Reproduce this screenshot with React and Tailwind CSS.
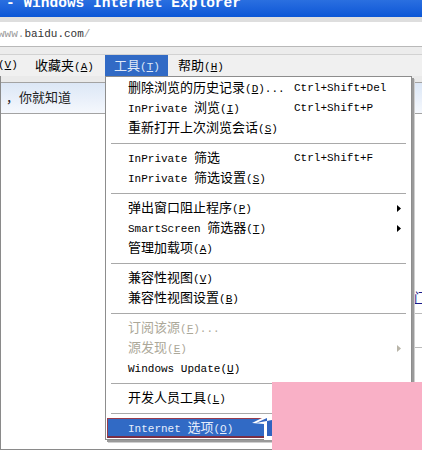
import React from 'react';

const CJK = /([\u2E80-\u9FFF\uFF00-\uFFEF]+)/;

// mixes 11px mono latin with 13px CJK, like the SimSun menus
const Txt = ({ s }) =>
    s.split(CJK).filter(Boolean).map((p, i) =>
        CJK.test(p)
            ? <span key={i} className="text-[13px]">{p}</span>
            : <span key={i} className="text-[11px] whitespace-pre">{p}</span>
    );

const Label = ({ t, k, after }) => (
    <span className="leading-none">
        <Txt s={t} />
        {k && (
            <span className="text-[11px]">(<span className="underline">{k}</span>)</span>
        )}
        {after && <span className="text-[11px]">{after}</span>}
    </span>
);

const Arrow = ({ grey }) => (
    <svg width="4" height="7" viewBox="0 0 4 7" className="ml-auto">
        <path d="M0 0 L4 3.5 L0 7 Z" fill={grey ? '#b8b4a8' : '#000'} />
    </svg>
);

const Item = ({ t, k, after, sc, sub, grey }) => (
    <div className={`flex h-[20px] items-center pl-[21px] pr-[9px] ${grey ? 'text-[#aca899]' : 'text-black'}`}>
        <div className="w-[166px] shrink-0 flex items-center"><Label t={t} k={k} after={after} /></div>
        {sc && <span className="text-[11px] leading-none">{sc}</span>}
        {sub && <Arrow grey={grey} />}
    </div>
);

const Sep = () => (
    <div className="h-[10px] flex items-center px-[4px]">
        <div className="w-full h-[1px] bg-[#a9a9a9]"></div>
    </div>
);

const App = () => {
    return (
        <div className="relative w-[422px] h-[450px] overflow-hidden bg-white flex flex-col font-['Liberation_Mono','Noto_Sans_CJK_SC',monospace]">
            {/* Title bar */}
            <div className="h-[17px] shrink-0 bg-gradient-to-b from-[#2a6fe0] to-[#0a56d6] overflow-hidden">
                <div className="mt-[-4px] ml-[6px] text-[14.5px] font-bold leading-none text-white whitespace-pre">- Windows Internet Explorer</div>
            </div>
            <div className="h-[5px] shrink-0 bg-[#dedede]"></div>

            {/* Address */}
            <div className="h-[25px] shrink-0 bg-white border-b border-[#b9b9b9] flex items-center">
                <span className="ml-[-2px] text-[11px] text-[#9a9a9a]">www.</span>
                <span className="text-[11px] text-[#333]">baidu.com</span>
                <span className="text-[11px] text-[#9a9a9a]">/</span>
            </div>
            <div className="h-[8px] shrink-0 bg-[#ececec] border-b border-[#d2d2d2]"></div>

            {/* Menu bar */}
            <div className="h-[21px] shrink-0 bg-[#f0f0f0] flex items-center text-black">
                <span className="ml-[-2px] w-[37px] text-[11px]">(<span className="underline">V</span>)</span>
                <span className="w-[70px]"><Label t="收藏夹" k="A" /></span>
                <span className="w-[63px] h-full bg-[#316ac5] text-[#dfe8f8] flex items-center pl-[9px]"><Label t="工具" k="T" /></span>
                <span className="ml-[10px]"><Label t="帮助" k="H" /></span>
            </div>

            {/* Page content under the menu */}
            <div className="relative flex-1 flex flex-col border-l border-[#8a8a8a] border-b">
                <div className="h-[6px] bg-[#eaeaea]"></div>
                <div className="h-[32px] border-y border-[#a3a3a3] bg-gradient-to-b from-[#dce7f6] to-[#f5f8fd] flex items-center pl-[5px] text-[#222]">
                    <span className="text-[13px] leading-none">，你就知道</span>
                </div>
                <div className="flex-1 bg-white"></div>

                <span className="absolute left-[413px] top-[216px] text-[13px] leading-none text-[#1a1a8a] underline">门</span>
                <div className="absolute left-[413px] top-[237px] w-[9px] h-[1px] bg-[#bbbbbb]"></div>
                <div className="absolute left-[413px] top-[271px] w-[9px] h-[1px] bg-[#bbbbbb]"></div>

                {/* Tools dropdown */}
                <div className="absolute left-[104px] top-0 w-[307px] bg-white border border-[#8d8d8d] p-[1px] shadow-[2px_2px_0_#9a9a9a,3px_3px_0_#cfcfcf]">
                    <Item t="删除浏览的历史记录" k="D" after="..." sc="Ctrl+Shift+Del" />
                    <Item t="InPrivate 浏览" k="I" sc="Ctrl+Shift+P" />
                    <Item t="重新打开上次浏览会话" k="S" />
                    <Sep />
                    <Item t="InPrivate 筛选" sc="Ctrl+Shift+F" />
                    <Item t="InPrivate 筛选设置" k="S" />
                    <Sep />
                    <Item t="弹出窗口阻止程序" k="P" sub />
                    <Item t="SmartScreen 筛选器" k="T" sub />
                    <Item t="管理加载项" k="A" />
                    <Sep />
                    <Item t="兼容性视图" k="V" />
                    <Item t="兼容性视图设置" k="B" />
                    <Sep />
                    <Item t="订阅该源" k="F" after="..." grey />
                    <Item t="源发现" k="E" sub grey />
                    <Item t="Windows Update" k="U" />
                    <Sep />
                    <Item t="开发人员工具" k="L" />
                    <Sep />
                    <div className="flex h-[20px] items-center pl-[20px] bg-[#316ac5] text-[#e6eefc] border border-[#9a3c4c] border-b-2 border-b-[#7a2f45]">
                        <Label t="Internet 选项" k="O" />
                    </div>
                </div>
            </div>

            {/* annotation arrow + pink cover */}
            <svg className="absolute left-[250px] top-[412px]" width="24" height="30" viewBox="0 0 24 30">
                <path d="M2 11 L18 3 L24 3 L24 28 L14 28 L14 12 Z" fill="#ffffff" />
                <path d="M6 11 L17 6 L17 24 L22 24 L22 8" fill="#2f63c0" />
            </svg>
            <div className="absolute left-[272px] top-[382px] w-[150px] h-[68px] bg-[#f9b0c6]"></div>
        </div>
    );
};

export default App;
